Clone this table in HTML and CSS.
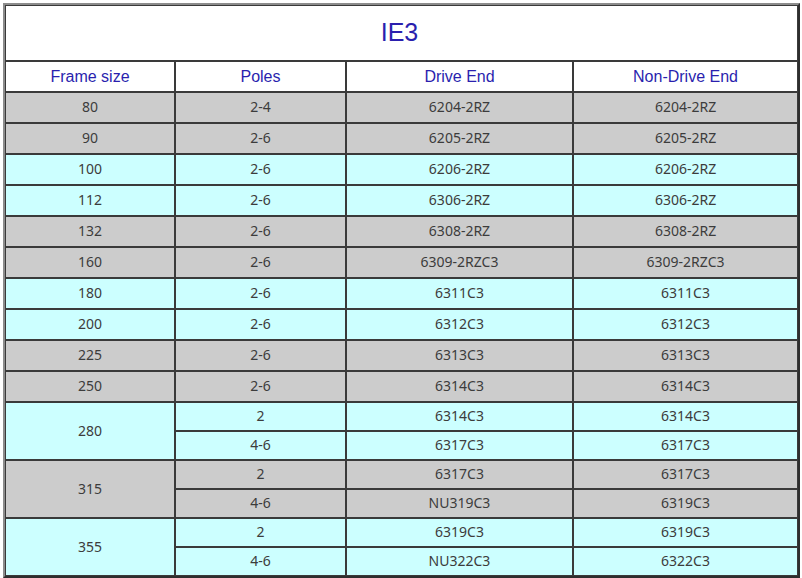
FILE: index.html
```html
<!DOCTYPE html>
<html>
<head>
<meta charset="utf-8">
<link rel="stylesheet" href="styles.css">
</head>
<body>
<table class="bearings">
  <colgroup>
    <col class="c1"><col class="c2"><col class="c3"><col class="c4">
  </colgroup>
  <tr class="title-row"><td colspan="4" class="title">IE3</td></tr>
  <tr class="head-row">
    <td class="head">Frame size</td>
    <td class="head">Poles</td>
    <td class="head">Drive End</td>
    <td class="head">Non-Drive End</td>
  </tr>
  <tr class="row grey"><td>80</td><td>2-4</td><td>6204-2RZ</td><td>6204-2RZ</td></tr>
  <tr class="row grey"><td>90</td><td>2-6</td><td>6205-2RZ</td><td>6205-2RZ</td></tr>
  <tr class="row cyan"><td>100</td><td>2-6</td><td>6206-2RZ</td><td>6206-2RZ</td></tr>
  <tr class="row cyan"><td>112</td><td>2-6</td><td>6306-2RZ</td><td>6306-2RZ</td></tr>
  <tr class="row grey"><td>132</td><td>2-6</td><td>6308-2RZ</td><td>6308-2RZ</td></tr>
  <tr class="row grey"><td>160</td><td>2-6</td><td>6309-2RZC3</td><td>6309-2RZC3</td></tr>
  <tr class="row cyan"><td>180</td><td>2-6</td><td>6311C3</td><td>6311C3</td></tr>
  <tr class="row cyan"><td>200</td><td>2-6</td><td>6312C3</td><td>6312C3</td></tr>
  <tr class="row grey"><td>225</td><td>2-6</td><td>6313C3</td><td>6313C3</td></tr>
  <tr class="row grey"><td>250</td><td>2-6</td><td>6314C3</td><td>6314C3</td></tr>
  <tr class="sub cyan"><td rowspan="2">280</td><td>2</td><td>6314C3</td><td>6314C3</td></tr>
  <tr class="sub cyan"><td>4-6</td><td>6317C3</td><td>6317C3</td></tr>
  <tr class="sub grey"><td rowspan="2">315</td><td>2</td><td>6317C3</td><td>6317C3</td></tr>
  <tr class="sub grey"><td>4-6</td><td>NU319C3</td><td>6319C3</td></tr>
  <tr class="sub cyan"><td rowspan="2">355</td><td>2</td><td>6319C3</td><td>6319C3</td></tr>
  <tr class="sub cyan"><td>4-6</td><td>NU322C3</td><td>6322C3</td></tr>
</table>
</body>
</html>
```
FILE: styles.css
```css
html, body {
  margin: 0;
  padding: 0;
  background: #ffffff;
}
body {
  padding: 3px 0 0 3px;
}
.bearings {
  border-collapse: separate;
  border-spacing: 0;
  table-layout: fixed;
  width: 797px;
  border-top: 2px solid #8c8c8c;
  border-left: 2px solid #8c8c8c;
  border-right: 2px solid #2e2e2e;
  border-bottom: 2px solid #2e2e2e;
  font-family: "Noto Sans", "DejaVu Sans", sans-serif;
}
.c1 { width: 170px; }
.c2 { width: 171px; }
.c3 { width: 227px; }
.c4 { width: 225px; }
.bearings td {
  box-sizing: border-box;
  border: 1px solid #3a3a3a;
  padding: 0 0 2px 0;
  text-align: center;
  vertical-align: middle;
  color: #3c3c3c;
  font-size: 14px;
}
.title-row td {
  height: 56px;
  background: #ffffff;
  font-family: "Liberation Sans", Arial, sans-serif;
  font-size: 25px;
  color: #2a1fae;
  padding: 0 4px 2px 0;
}
.head-row td {
  height: 31px;
  background: #ffffff;
  font-family: "Liberation Sans", Arial, sans-serif;
  font-size: 16px;
  color: #2a1fae;
  padding: 1px 0 0 0;
}
.row td { height: 31px; }
.sub td { height: 29px; }
.grey td { background: #cccccc; }
.cyan td { background: #ccffff; }
```
